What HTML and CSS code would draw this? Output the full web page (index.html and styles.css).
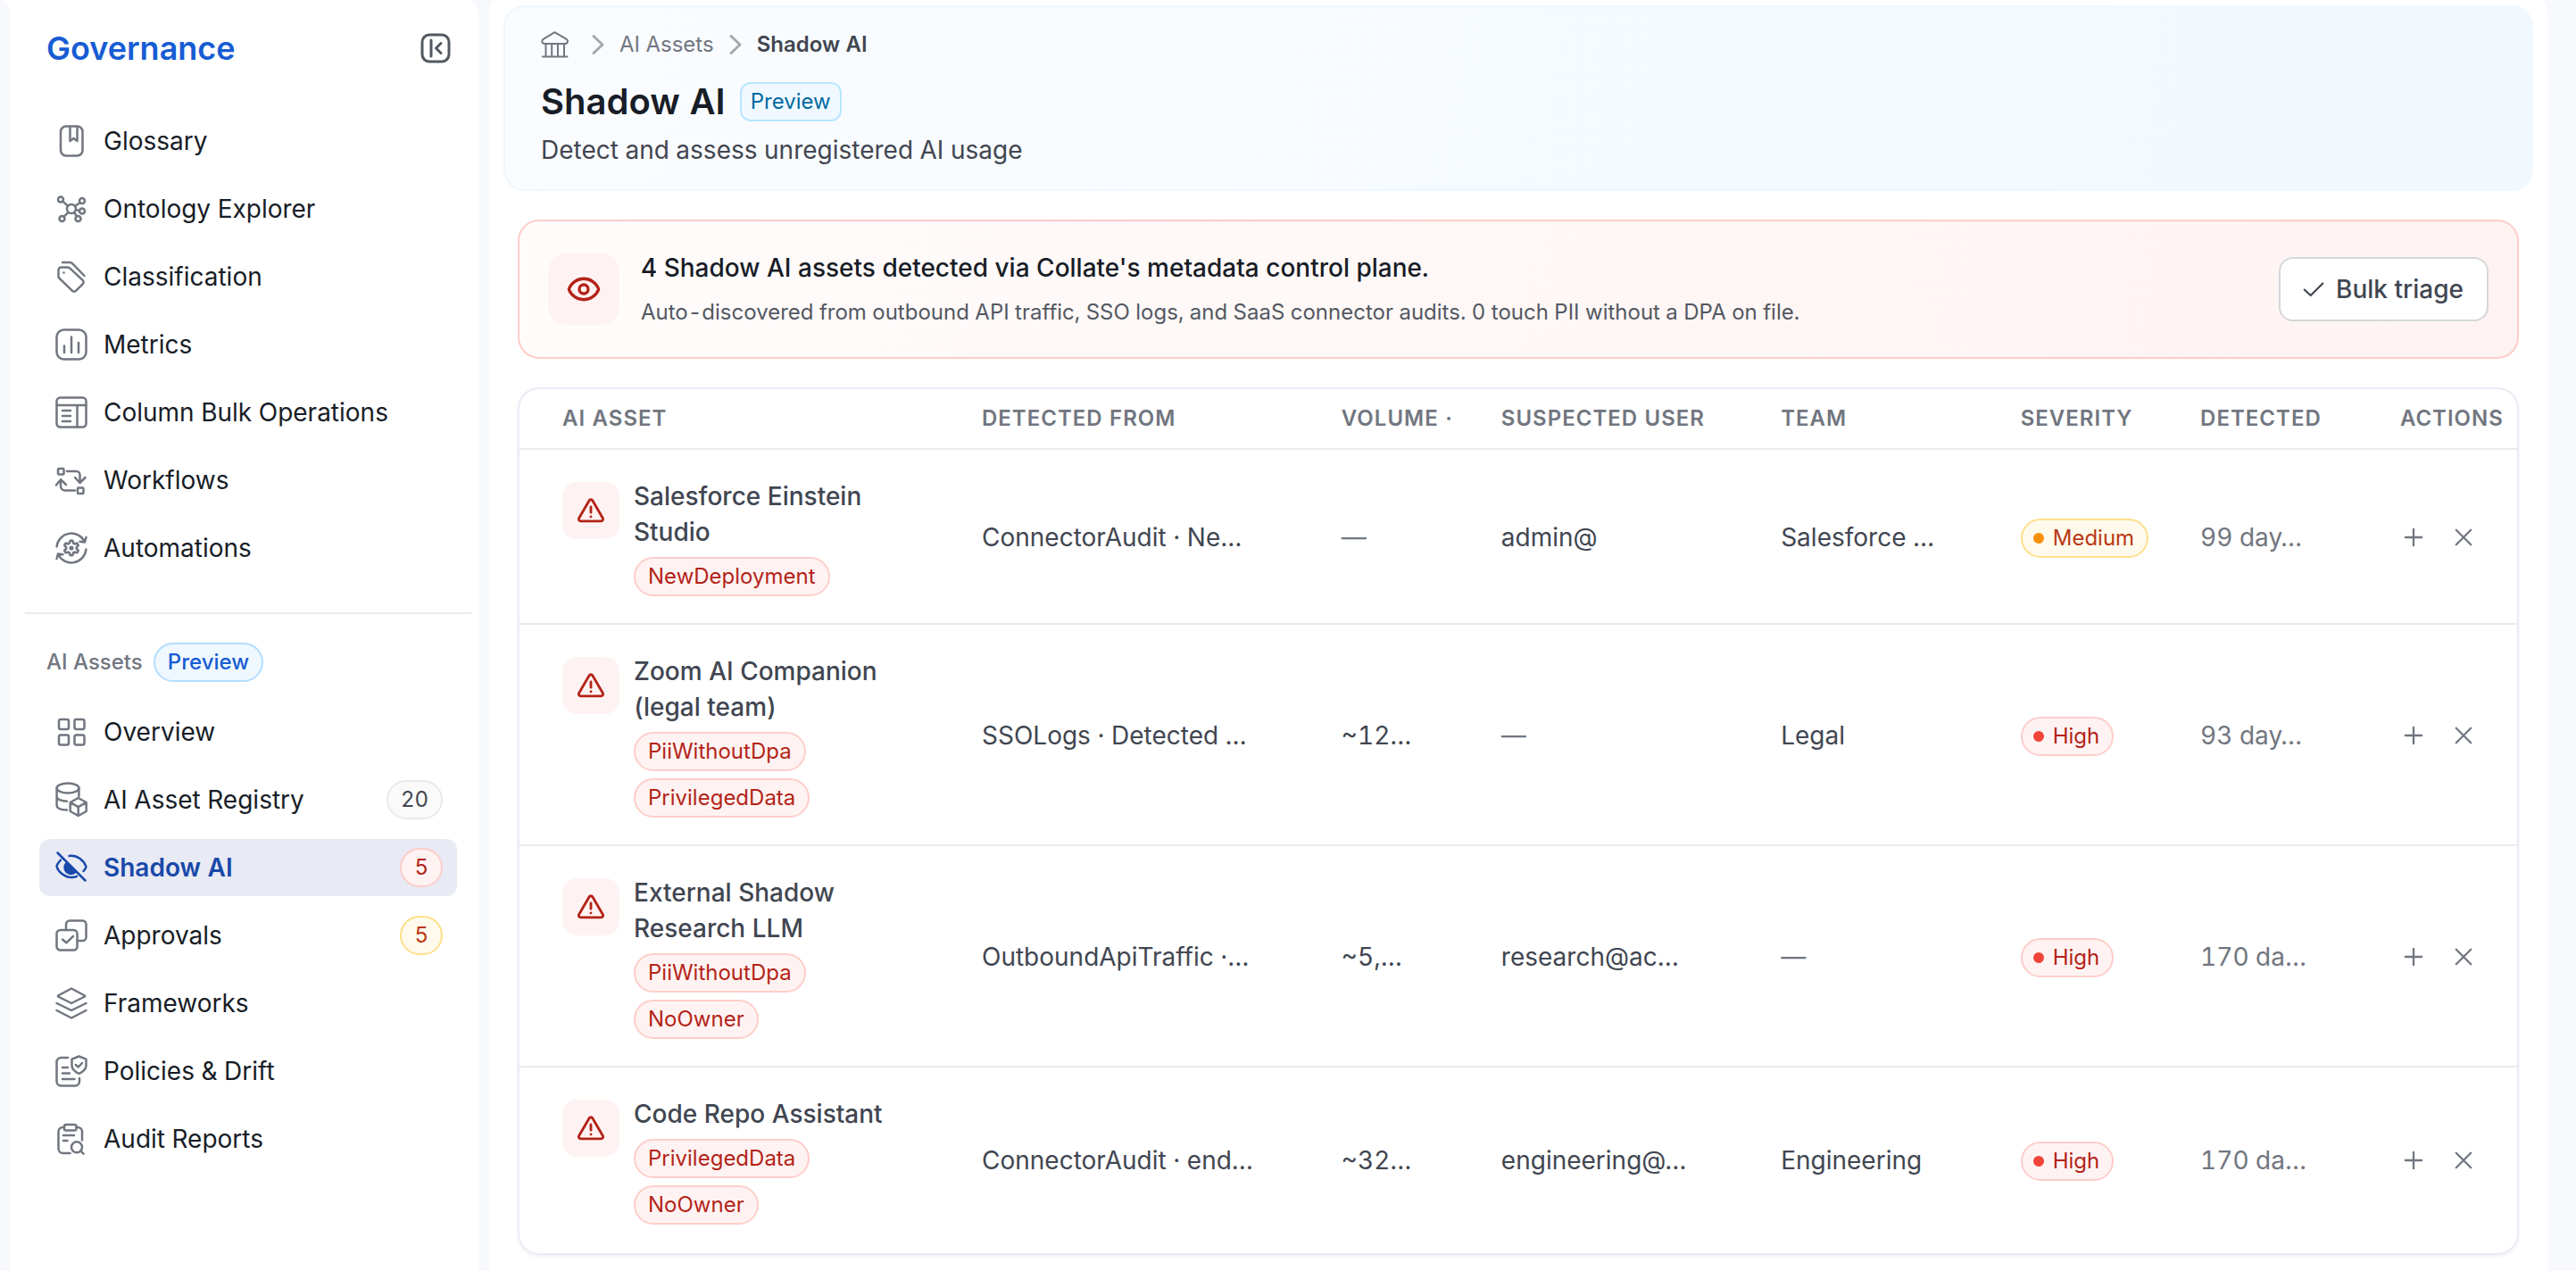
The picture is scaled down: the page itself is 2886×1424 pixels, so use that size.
FILE: index.html
```html
<!DOCTYPE html>
<html lang="en">
<head>
    <meta charset="UTF-8">
    <meta name="viewport" content="width=device-width, initial-scale=1.0">
    <title>Shadow AI</title>
    <link rel="stylesheet" href="styles.css">
</head>
<body>
    <!-- Shared icons -->
    <svg class="sprite" aria-hidden="true">
        <symbol id="i-warning" viewBox="0 0 24 24"><path d="M10.6 4.2 2.6 18a1.6 1.6 0 0 0 1.4 2.4h16a1.6 1.6 0 0 0 1.4-2.4L13.4 4.2a1.6 1.6 0 0 0-2.8 0z"/><path d="M12 9.2v4.3M12 16.8v.1"/></symbol>
        <symbol id="i-chevron" viewBox="0 0 24 24"><path d="M7 2.500l10 9.500-10 9.500"/></symbol>
        <symbol id="i-plus" viewBox="0 0 24 24"><path d="M12 2v20M2 12h20"/></symbol>
        <symbol id="i-close" viewBox="0 0 24 24"><path d="M3 3l18 18M21 3L3 21"/></symbol>
    </svg>

    <div class="app">
        <div class="rail"></div>
        <aside class="sidebar">
            <div class="sidebar-header">
                <h2>Governance</h2>
                <button type="button" class="collapse-btn" aria-label="Collapse sidebar">
                    <svg viewBox="0 0 36 36"><rect x="3" y="3" width="30" height="30" rx="8"/><path d="M13 9v18M24 12.500l-5.500 5.500 5.500 5.500"/></svg>
                </button>
            </div>
            <nav class="menu">
                <a href="#"><svg viewBox="0 0 36 36"><rect x="6" y="1.500" width="24.500" height="33" rx="6"/><path d="M16.500 2v16l4-3 4 3V2"/></svg>Glossary</a>
                <a href="#"><svg viewBox="0 0 36 36"><circle cx="18" cy="18" r="5"/><circle cx="6" cy="7.500" r="3"/><circle cx="30" cy="9" r="3"/><circle cx="30" cy="20.500" r="3"/><circle cx="7.500" cy="29" r="3"/><circle cx="25.500" cy="29" r="3"/><path d="M8.300 9.600l5.900 5.200M27.600 11l-5.700 4M27 20l-4.100-.9M9.600 26.800l5-5.100M24 26.300l-3-4.200"/></svg>Ontology Explorer</a>
                <a href="#"><svg viewBox="0 0 36 36"><path d="M3.500 10.500a3 3 0 0 1 3-3h7a4 4 0 0 1 2.900 1.200l14.200 13.200a3 3 0 0 1 0 4.400l-7.400 7.400a3 3 0 0 1-4.400 0L4.600 19.900a4 4 0 0 1-1.100-2.700zM8 2h8.200a4 4 0 0 1 2.800 1.200L32.500 17"/><path d="M9.500 13.500v.1"/></svg>Classification</a>
                <a href="#"><svg viewBox="0 0 36 36"><rect x="1.500" y="1.500" width="33" height="33" rx="8"/><path d="M10 19.500V27M18 9.500V27M26 16v11"/></svg>Metrics</a>
                <a href="#"><svg viewBox="0 0 36 36"><rect x="1.500" y="1.500" width="33" height="33" rx="4"/><path d="M1.500 10h33M24.500 10v24.500M8 16h9M8 22h9M8 28h9"/></svg>Column Bulk Operations</a>
                <a href="#"><svg viewBox="0 0 36 36"><rect x="3" y="5" width="6.500" height="6.500" rx="1"/><rect x="25" y="26.500" width="6.500" height="6.500" rx="1"/><path d="M13 8h10.500a4 4 0 0 1 4 4v9M22 15l5.500 6 6-6M22 29.500H11a5 5 0 0 1-5-5v-7M.900 23.500l5.300-6.200 5.800 5.700"/></svg>Workflows</a>
                <a href="#"><svg viewBox="0 0 36 36"><path d="M1.600 16.400A16.500 16.500 0 0 1 32.800 10.800M34.400 19.600A16.500 16.500 0 0 1 3.200 25.200M27.500 10.800l5.500.6 1.500-5.400M8.500 25.200l-5.500-.6L1.500 30"/><circle cx="18" cy="18" r="1.300"/><path stroke-width="3.200" transform="translate(8 8) scale(.83)" d="M12.220 2h-.44a2 2 0 0 0-2 2v.18a2 2 0 0 1-1 1.730l-.43.250a2 2 0 0 1-2 0l-.15-.08a2 2 0 0 0-2.730.730l-.22.380a2 2 0 0 0 .73 2.730l.15.100a2 2 0 0 1 1 1.720v.51a2 2 0 0 1-1 1.740l-.15.090a2 2 0 0 0-.73 2.730l.22.380a2 2 0 0 0 2.730.730l.15-.08a2 2 0 0 1 2 0l.43.250a2 2 0 0 1 1 1.730V20a2 2 0 0 0 2 2h.44a2 2 0 0 0 2-2v-.18a2 2 0 0 1 1-1.730l.43-.25a2 2 0 0 1 2 0l.15.080a2 2 0 0 0 2.730-.73l.22-.39a2 2 0 0 0-.73-2.730l-.15-.08a2 2 0 0 1-1-1.740v-.5a2 2 0 0 1 1-1.740l.15-.09a2 2 0 0 0 .73-2.730l-.22-.38a2 2 0 0 0-2.730-.73l-.15.080a2 2 0 0 1-2 0l-.43-.25a2 2 0 0 1-1-1.730V4a2 2 0 0 0-2-2z"/></svg>Automations</a>
            </nav>
            <hr>
            <div class="menu-label">AI Assets <span class="badge badge-blue">Preview</span></div>
            <nav class="menu">
                <a href="#"><svg viewBox="0 0 36 36"><rect x="4" y="4" width="11" height="11" rx="2"/><rect x="21.500" y="4" width="11" height="11" rx="2"/><rect x="4" y="21.500" width="11" height="11" rx="2"/><rect x="21.500" y="21.500" width="11" height="11" rx="2"/></svg>Overview</a>
                <a href="#"><svg viewBox="0 0 36 36"><ellipse cx="14" cy="5" rx="12.400" ry="5.500"/><path d="M1.600 5v19.500c0 3 5 4.800 11.400 5M26.400 5v9M1.600 14.500c0 3 5 5 11.400 5.200M25.700 16l9 5v10l-9 5-9-5V21zM17 21.200l8.700 5 8.700-5M25.700 26.200V35.500"/></svg>AI Asset Registry <span class="badge badge-gray">20</span></a>
                <a href="#" class="active"><svg viewBox="0 0 36 36"><path d="M2.500 1.500l31 31M15.500 5C25 3.800 32 10.500 34.300 16.600c.3 1-1.300 3.700-2.800 5.400M6 9.500C3.800 11.900 1.500 15.600 1.600 17c1.500 5.500 8.500 12 16.400 12 2.200 0 4-.4 6-1.200"/><path class="fill" d="M12.500 13a7 7 0 0 0 10 9.800z"/></svg>Shadow AI <span class="badge badge-red">5</span></a>
                <a href="#"><svg viewBox="0 0 36 36"><rect x="1.500" y="12" width="23" height="22.500" rx="4"/><path d="M12 12V5.500a4 4 0 0 1 4-4h14.500a4 4 0 0 1 4 4V20a4 4 0 0 1-4 4h-6M8 22.500l4.300 3.800 7.700-7.500"/></svg>Approvals <span class="badge badge-yellow">5</span></a>
                <a href="#"><svg viewBox="0 0 36 36"><path d="M18 1.500l15 8v1l-15 7.500-15-7.500v-1zM1.500 18L18 26l16.500-8M1.500 26L18 34.500 34.500 26"/></svg>Frameworks</a>
                <a href="#"><svg viewBox="0 0 36 36"><path d="M14 3H6.500a5 5 0 0 0-5 5v21.500a5 5 0 0 0 5 5H22a5 5 0 0 0 5-5V26M8 14h6M8 20.500h8M8 27h13.500M26.500 1.500l8 3.200v7c0 4-3.500 7-8 9.300-4.500-2.300-8-5.300-8-9.300v-7zM22.800 11l3 2.500 4.200-4.500"/></svg>Policies &amp; Drift</a>
                <a href="#"><svg viewBox="0 0 36 36"><rect x="10" y="2" width="13.500" height="6.500" rx="2"/><path d="M10 5H8a5 5 0 0 0-4.500 5v19a5 5 0 0 0 5 5h8M23.500 5h1.500a5 5 0 0 1 5 5v9.500M9 14h12M9 20h4.500M28.500 31.500l3 3.200"/><circle cx="24" cy="27.300" r="6"/></svg>Audit Reports</a>
            </nav>
        </aside>

        <main class="main">
            <header class="page-header">
                <nav class="breadcrumb" aria-label="Breadcrumb">
                    <a href="#" aria-label="Home"><svg class="home" viewBox="0 0 32 32"><path d="M15.500 2.200l12.700 7.400a2.800 2.800 0 0 1 1.800 2.400c0 2-1.200 3-3 3H4.300c-1.800 0-3-1-3-3a2.800 2.800 0 0 1 1.700-2.400zM5.500 15v13M12.200 15v13M19 15v13M26 15v13M2 29.500h27.500"/></svg></a>
                    <svg class="sep"><use href="#i-chevron"/></svg>
                    <a href="#">AI Assets</a>
                    <svg class="sep"><use href="#i-chevron"/></svg>
                    <span class="current">Shadow AI</span>
                </nav>
                <div class="title-row">
                    <h1>Shadow AI</h1>
                    <span class="preview-tag">Preview</span>
                </div>
                <p>Detect and assess unregistered AI usage</p>
            </header>

            <div class="content">
                <section class="alert">
                    <div class="alert-icon">
                        <svg viewBox="0 0 24 24"><path d="M2.100 12.400a1 1 0 0 1 0-.8 10.700 10.700 0 0 1 19.800 0 1 1 0 0 1 0 .8 10.700 10.700 0 0 1-19.800 0z"/><circle cx="12" cy="12" r="3"/></svg>
                    </div>
                    <div class="alert-text">
                        <strong>4 Shadow AI assets detected via Collate's metadata control plane.</strong>
                        <span>Auto-discovered from outbound API traffic, SSO logs, and SaaS connector audits. 0 touch PII without a DPA on file.</span>
                    </div>
                    <button type="button" class="triage-btn">
                        <svg viewBox="0 0 24 24"><path d="M2.500 12.500l6.500 6L21.500 6"/></svg>
                        Bulk triage
                    </button>
                </section>

                <div class="table-card">
                    <table>
                        <colgroup>
                            <col class="c-asset"><col class="c-from"><col class="c-volume"><col class="c-user">
                            <col class="c-team"><col class="c-severity"><col class="c-detected"><col class="c-actions">
                        </colgroup>
                        <thead>
                            <tr>
                                <th>AI Asset</th>
                                <th>Detected From</th>
                                <th>Volume ·</th>
                                <th>Suspected User</th>
                                <th>Team</th>
                                <th>Severity</th>
                                <th>Detected</th>
                                <th>Actions</th>
                            </tr>
                        </thead>
                        <tbody>
                            <tr>
                                <td>
                                    <div class="asset">
                                        <span class="asset-icon"><svg><use href="#i-warning"/></svg></span>
                                        <div class="asset-info">
                                            <span class="asset-name">Salesforce Einstein Studio</span>
                                            <span class="badge badge-red">NewDeployment</span>
                                        </div>
                                    </div>
                                </td>
                                <td>ConnectorAudit · Ne…</td>
                                <td class="muted">—</td>
                                <td>admin@</td>
                                <td>Salesforce …</td>
                                <td><span class="badge badge-yellow severity">Medium</span></td>
                                <td class="muted">99 day…</td>
                                <td>
                                    <div class="actions">
                                        <button type="button" aria-label="Register"><svg><use href="#i-plus"/></svg></button>
                                        <button type="button" aria-label="Dismiss"><svg><use href="#i-close"/></svg></button>
                                    </div>
                                </td>
                            </tr>
                            <tr>
                                <td>
                                    <div class="asset">
                                        <span class="asset-icon"><svg><use href="#i-warning"/></svg></span>
                                        <div class="asset-info">
                                            <span class="asset-name">Zoom AI Companion (legal team)</span>
                                            <span class="badge badge-red">PiiWithoutDpa</span>
                                            <span class="badge badge-red">PrivilegedData</span>
                                        </div>
                                    </div>
                                </td>
                                <td>SSOLogs · Detected …</td>
                                <td>~12…</td>
                                <td class="muted">—</td>
                                <td>Legal</td>
                                <td><span class="badge badge-red severity">High</span></td>
                                <td class="muted">93 day…</td>
                                <td>
                                    <div class="actions">
                                        <button type="button" aria-label="Register"><svg><use href="#i-plus"/></svg></button>
                                        <button type="button" aria-label="Dismiss"><svg><use href="#i-close"/></svg></button>
                                    </div>
                                </td>
                            </tr>
                            <tr>
                                <td>
                                    <div class="asset">
                                        <span class="asset-icon"><svg><use href="#i-warning"/></svg></span>
                                        <div class="asset-info">
                                            <span class="asset-name">External Shadow Research LLM</span>
                                            <span class="badge badge-red">PiiWithoutDpa</span>
                                            <span class="badge badge-red">NoOwner</span>
                                        </div>
                                    </div>
                                </td>
                                <td>OutboundApiTraffic ·…</td>
                                <td>~5,…</td>
                                <td>research@ac…</td>
                                <td class="muted">—</td>
                                <td><span class="badge badge-red severity">High</span></td>
                                <td class="muted">170 da…</td>
                                <td>
                                    <div class="actions">
                                        <button type="button" aria-label="Register"><svg><use href="#i-plus"/></svg></button>
                                        <button type="button" aria-label="Dismiss"><svg><use href="#i-close"/></svg></button>
                                    </div>
                                </td>
                            </tr>
                            <tr>
                                <td>
                                    <div class="asset">
                                        <span class="asset-icon"><svg><use href="#i-warning"/></svg></span>
                                        <div class="asset-info">
                                            <span class="asset-name">Code Repo Assistant</span>
                                            <span class="badge badge-red">PrivilegedData</span>
                                            <span class="badge badge-red">NoOwner</span>
                                        </div>
                                    </div>
                                </td>
                                <td>ConnectorAudit · end…</td>
                                <td>~32…</td>
                                <td>engineering@…</td>
                                <td>Engineering</td>
                                <td><span class="badge badge-red severity">High</span></td>
                                <td class="muted">170 da…</td>
                                <td>
                                    <div class="actions">
                                        <button type="button" aria-label="Register"><svg><use href="#i-plus"/></svg></button>
                                        <button type="button" aria-label="Dismiss"><svg><use href="#i-close"/></svg></button>
                                    </div>
                                </td>
                            </tr>
                        </tbody>
                    </table>
                </div>
            </div>
        </main>
    </div>
</body>
</html>
```
FILE: styles.css
```css
* {
    box-sizing: border-box;
}
body {
    margin: 0;
    font-family: Inter, 'Liberation Sans', sans-serif;
    font-size: 28px;
    font-variant-numeric: tabular-nums;
    line-height: 40px;
    color: #414651;
    background-color: #f8f9fd;
}
h1, h2, p {
    margin: 0;
}
a {
    color: inherit;
    text-decoration: none;
}
button {
    font: inherit;
    color: inherit;
    cursor: pointer;
}
svg {
    flex: none;
    fill: none;
    stroke: currentColor;
    stroke-linecap: round;
    stroke-linejoin: round;
    overflow: visible;
}
.sprite {
    display: none;
}

/* Frame */
.app {
    display: flex;
    min-height: 100vh;
}
.rail {
    display: flex;
    width: 12px;
    background-color: #fff;
}
.rail::before {
    content: "";
    flex: 1;
    background-color: #f8f9fd;
    border-top-right-radius: 12px 20px;
}
.sidebar {
    width: 524px;
    margin-right: 12px;
    padding: 28px 8px 0 16px;
    background-color: #fff;
    border-top-right-radius: 10px 20px;
}
.main {
    flex: 1;
    min-width: 0;
    margin-right: 32px;
    padding: 6px 16px 16px;
    background-color: #fff;
    border-radius: 6px 6px 0 0 / 16px 16px 0 0;
}

/* Sidebar */
.sidebar-header {
    display: flex;
    justify-content: space-between;
    align-items: center;
    height: 52px;
    padding: 0 22px 0 24px;
    margin-bottom: 46px;
}
.sidebar-header h2 {
    font-size: 36px;
    font-weight: 600;
    color: #175cd3;
}
.collapse-btn {
    display: flex;
    padding: 0;
    border: none;
    background: none;
    color: #535862;
}
.collapse-btn svg {
    width: 36px;
    height: 36px;
    stroke-width: 3;
}
.menu {
    display: flex;
    flex-direction: column;
    gap: 12px;
    padding: 0 16px;
}
.menu a {
    display: flex;
    align-items: center;
    height: 64px;
    padding: 0 16px 0 18px;
    border-radius: 12px;
    color: #181d27;
}
.menu a svg {
    width: 36px;
    height: 36px;
    margin-right: 18px;
    color: #717680;
    stroke-width: 2.5;
}
.menu a .badge {
    margin-left: auto;
}
.menu a.active {
    background-color: #e8eaf4;
    color: #1849a9;
    font-weight: 600;
}
.menu a.active svg {
    color: #1849a9;
}
.menu a.active .badge {
    font-weight: 400;
}
.fill {
    fill: currentColor;
}
.sidebar hr {
    height: 2px;
    margin: 40px 0 32px;
    border: none;
    background-color: #e9eaeb;
}
.menu-label {
    display: flex;
    align-items: center;
    gap: 12px;
    margin-bottom: 24px;
    padding-left: 24px;
    font-size: 24px;
    font-weight: 500;
    color: #717680;
}

/* Badges */
.badge {
    display: inline-flex;
    align-items: center;
    height: 44px;
    padding: 0 14px;
    border: 2px solid;
    border-radius: 22px;
    font-size: 24px;
    line-height: 36px;
    white-space: nowrap;
}
.badge-blue {
    color: #175cd3;
    background-color: #eff8ff;
    border-color: #b2ddff;
}
.badge-gray {
    color: #414651;
    background-color: #fafafa;
    border-color: #e9eaeb;
}
.badge-red {
    color: #b42318;
    background-color: #fef3f2;
    border-color: #fecdca;
}
.badge-yellow {
    color: #b93815;
    background-color: #fffaeb;
    border-color: #fedf89;
}
.severity {
    padding-left: 12px;
}
.severity::before {
    content: "";
    width: 12px;
    height: 12px;
    margin-right: 10px;
    border-radius: 50%;
    background-color: #f04438;
}
.severity.badge-yellow::before {
    background-color: #f79009;
}

/* Page header */
.page-header {
    padding: 24px 40px;
    border: 2px solid #eff8ff;
    border-radius: 24px;
    background: linear-gradient(100deg, #fafcff 0%, #f1f9fe 100%);
}
.breadcrumb {
    display: flex;
    align-items: center;
    height: 36px;
    margin-bottom: 16px;
    font-size: 24px;
    color: #717680;
}
.breadcrumb a {
    display: flex;
}
.home {
    width: 32px;
    height: 32px;
    margin-right: 8px;
    stroke-width: 2;
}
.sep {
    width: 24px;
    height: 24px;
    margin: 0 12px;
    color: #a4a7ae;
    stroke-width: 3;
}
.breadcrumb .current {
    font-weight: 600;
    color: #414651;
}
.title-row {
    display: flex;
    align-items: center;
    gap: 16px;
    margin-bottom: 4px;
}
.title-row h1 {
    font-size: 40px;
    line-height: 60px;
    font-weight: 600;
    color: #181d27;
}
.preview-tag {
    padding: 2px 10px;
    border: 2px solid #b9e6fe;
    border-radius: 12px;
    background-color: #f0f9ff;
    color: #026aa2;
    font-size: 24px;
    line-height: 36px;
}

/* Alert */
.content {
    padding: 32px 16px 0;
}
.alert {
    display: flex;
    align-items: center;
    margin-bottom: 32px;
    padding: 36px 32px;
    border: 2px solid #fecdca;
    border-radius: 24px;
    background: linear-gradient(100deg, #fffcfb 0%, #fef3f2 100%);
}
.alert-icon {
    display: flex;
    align-items: center;
    justify-content: center;
    width: 80px;
    height: 80px;
    margin-right: 24px;
    border-radius: 20px;
    background-color: #fef3f2;
    color: #b42318;
}
.alert-icon svg {
    width: 40px;
    height: 40px;
    stroke-width: 2;
}
.alert-text {
    display: flex;
    flex: 1;
    flex-direction: column;
    gap: 12px;
    margin: -4px 0;
}
.alert-text strong {
    font-weight: 500;
    color: #181d27;
}
.alert-text span {
    font-size: 24px;
    line-height: 36px;
    color: #535862;
}
.triage-btn {
    display: flex;
    align-items: center;
    gap: 12px;
    height: 72px;
    padding: 0 26px 0 24px;
    border: 2px solid #d5d7da;
    border-radius: 16px;
    background-color: #fff;
    font-weight: 500;
}
.triage-btn svg {
    width: 26px;
    height: 26px;
    stroke-width: 2;
}

/* Table */
.table-card {
    border: 2px solid #eaecf5;
    border-radius: 24px;
    box-shadow: 0 2px 4px rgba(10, 13, 18, 0.06);
    overflow: hidden;
}
table {
    width: 100%;
    table-layout: fixed;
    border-collapse: separate;
    border-spacing: 0;
}
.c-asset { width: 21%; }
.c-from { width: 18%; }
.c-volume { width: 8%; }
.c-user { width: 14%; }
.c-team { width: 12%; }
.c-severity { width: 9%; }
.c-detected { width: 10%; }
.c-actions { width: 8%; }
th {
    height: 68px;
    padding: 0 0 0 48px;
    border-bottom: 2px solid #e9eaeb;
    font-size: 24px;
    line-height: 36px;
    font-weight: 600;
    letter-spacing: 1px;
    text-align: left;
    text-transform: uppercase;
    white-space: nowrap;
    color: #717680;
}
td {
    padding: 32px 0 30px 48px;
    border-bottom: 2px solid #e9eaeb;
    white-space: nowrap;
}
tbody tr:last-child td {
    padding-bottom: 32px;
    border-bottom: none;
}
.muted {
    color: #717680;
}
.asset {
    display: flex;
    align-items: flex-start;
    gap: 16px;
    padding-right: 48px;
}
.asset-icon {
    display: flex;
    align-items: center;
    justify-content: center;
    flex: none;
    width: 64px;
    height: 64px;
    margin-top: 4px;
    border-radius: 16px;
    background-color: #fef3f2;
    color: #b42318;
}
.asset-icon svg {
    width: 34px;
    height: 34px;
    stroke-width: 2;
}
.asset-info {
    display: flex;
    flex-direction: column;
    align-items: flex-start;
    gap: 8px;
}
.asset-name {
    font-weight: 500;
    white-space: normal;
}
.actions {
    display: flex;
    gap: 34px;
    padding-left: 4px;
}
.actions button {
    display: flex;
    padding: 0;
    border: none;
    background: none;
    color: #717680;
}
.actions svg {
    width: 22px;
    height: 22px;
    stroke-width: 2.5;
}
```
